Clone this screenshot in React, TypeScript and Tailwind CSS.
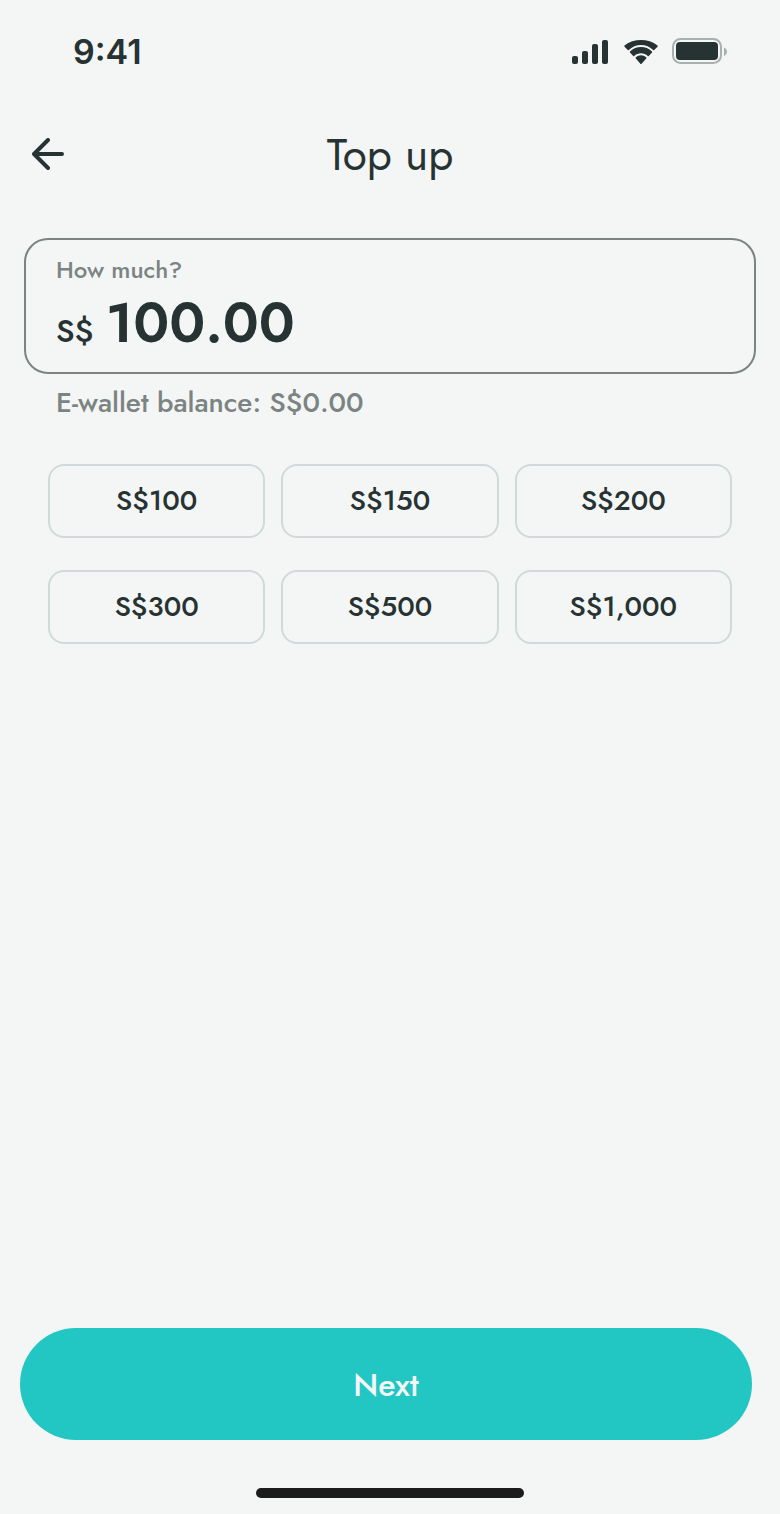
const amounts = ["S$100", "S$150", "S$200", "S$300", "S$500", "S$1,000"];

function StatusBar() {
  return (
    <div className="flex h-[104px] shrink-0 items-center justify-between pr-[52px] pl-[73px]">
      <span className="font-['Inter',sans-serif] text-[34px] leading-10 font-semibold">9:41</span>
      <div className="flex items-center pb-[2px]">
        <svg width="36" height="26" viewBox="0 0 36 26" fill="currentColor">
          <rect x="0" y="18" width="6" height="8" rx="2" />
          <rect x="10" y="13" width="6" height="13" rx="2" />
          <rect x="20" y="6" width="6" height="20" rx="2" />
          <rect x="30" y="2" width="6" height="24" rx="2" />
        </svg>
        <svg className="ml-4" width="34" height="26" viewBox="0 0 34 26" fill="currentColor">
          <g transform="translate(0 1.3) scale(1 1.033)">
            <path d="M17 5.500c4.700 0 9 1.800 12.200 4.900.3.300.7.300 1 0l3.300-3.300c.3-.3.3-.8 0-1.100C24.300-1.100 9.700-1.100.5 6c-.3.300-.3.800 0 1.100l3.300 3.300c.3.300.7.300 1 0C8 7.300 12.300 5.500 17 5.500Z" />
            <path d="M17 13.500c2.600 0 5 .9 6.800 2.600.3.300.7.300 1 0l3.200-3.300c.3-.3.300-.8 0-1.100-6.200-5.600-15.800-5.600-22 0-.3.300-.3.800 0 1.100l3.200 3.300c.3.300.7.300 1 0 1.800-1.700 4.200-2.600 6.800-2.600Z" />
            <path d="M22.200 18.500c.3-.3.300-.8 0-1.100-3-2.600-7.400-2.600-10.400 0-.3.300-.3.800 0 1.100l4.600 5.100c.3.400.9.400 1.200 0l4.600-5.100Z" />
          </g>
        </svg>
        <svg className="ml-[14px]" width="56" height="26" viewBox="0 0 56 26" fill="none">
          <rect x="1" y="1" width="48" height="24" rx="7.500" stroke="#aaafaf" strokeWidth="2" />
          <rect x="4" y="4" width="42" height="18" rx="4" fill="currentColor" />
          <path d="M52 9.500c1.800.8 3 2.300 3 4.200s-1.200 3.400-3 4.200Z" fill="#aaafaf" />
        </svg>
      </div>
    </div>
  );
}

export default function App() {
  return (
    <div className="flex h-[1514px] w-[780px] flex-col bg-[#f4f6f5] font-['Jost','Lato',sans-serif] text-[#263332]">
      <StatusBar />
      <header className="grid h-[100px] shrink-0 grid-cols-[1fr_auto_1fr] items-center px-8">
        <button aria-label="Back" className="justify-self-start">
          <svg width="32" height="32" viewBox="0 0 32 32" fill="none" stroke="currentColor" strokeWidth="4" strokeLinecap="round" strokeLinejoin="round">
            <path d="M30 16H2M16 2 2 16l14 14" />
          </svg>
        </button>
        <h1 className="pt-[2px] text-[44px] leading-[50px]">Top up</h1>
      </header>
      <main className="flex grow flex-col px-6 pt-[34px]">
        <label className="flex h-[136px] flex-col rounded-[24px] border-2 border-[#7b8482] px-[30px] pt-[15px]">
          <span className="text-[24px] leading-[30px] font-medium text-[#7b8482]">How much?</span>
          <span className="mt-[9px] flex items-baseline gap-3">
            <span className="text-[32px] leading-10 font-medium">S$</span>
            <span className="text-[56px] leading-[58px] font-semibold">100.00</span>
          </span>
        </label>
        <p className="mt-3 pl-8 text-[28px] leading-[34px] font-medium text-[#7b8482]">E-wallet balance: S$0.00</p>
        <div className="mt-11 grid grid-cols-3 gap-x-4 gap-y-8 px-6">
          {amounts.map((amount) => (
            <button key={amount} className="h-[74px] rounded-[16px] border-2 border-[#d1dada] text-[28px] leading-[34px] font-medium">
              {amount}
            </button>
          ))}
        </div>
      </main>
      <footer className="flex h-[186px] shrink-0 flex-col pr-7 pl-5">
        <button className="h-28 rounded-full bg-[#22c7c4] pt-[2px] text-[32px] leading-10 font-medium text-[#f4f6f5]">Next</button>
        <div className="mt-12 ml-[236px] h-[10px] w-[268px] rounded-full bg-[#1b1c1b]" />
      </footer>
    </div>
  );
}
